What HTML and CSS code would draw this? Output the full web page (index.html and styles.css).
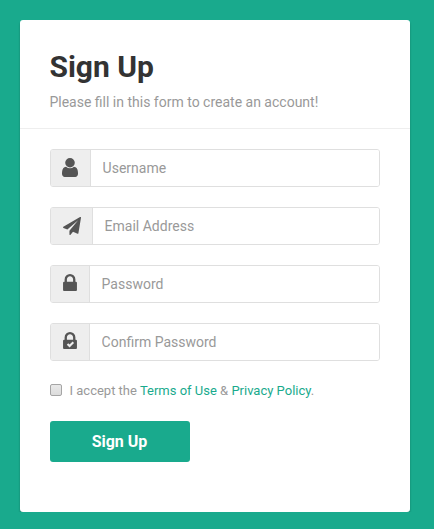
FILE: index.html
```html
<!DOCTYPE html>
<html lang="en">
<head>
<meta charset="utf-8">
<title>Sign Up</title>
<link rel="stylesheet" href="styles.css">
</head>
<body>
<form class="signup">
  <h2 class="title">Sign Up</h2>
  <p class="intro">Please fill in this form to create an account!</p>
  <hr class="rule">
  <div class="group">
    <span class="addon addon-user"><svg width="16" height="19" viewBox="256 128 1280 1536" preserveAspectRatio="none"><path d="M1536 1399q0 109-62.5 187t-150.5 78h-854q-88 0-150.5-78t-62.5-187q0-85 8.5-160.5t31.5-152 58.5-131 94-89 134.5-34.5q131 128 313 128t313-128q76 0 134.5 34.5t94 89 58.5 131 31.5 152 8.5 160.5zm-256-887q0 159-112.5 271.5t-271.5 112.5-271.5-112.5-112.5-271.5 112.5-271.5 271.5-112.5 271.5 112.5 112.5 271.5z"/></svg></span>
    <input class="field" type="text" placeholder="Username">
  </div>
  <div class="group">
    <span class="addon addon-plane"><svg width="18" height="18" viewBox="0 0 1792 1792"><path d="M1764 11q33 24 27 64l-256 1536q-5 29-32 45-14 8-31 8-11 0-24-5l-453-185-242 295q-18 23-49 23-13 0-22-4-19-7-30.5-23.5t-11.5-36.5v-349l864-1059-1069 925-395-162q-37-14-40-55-2-40 32-59l1664-960q15-9 32-9 20 0 36 11z"/></svg></span>
    <input class="field" type="text" placeholder="Email Address">
  </div>
  <div class="group">
    <span class="addon addon-lock"><svg width="14" height="17" viewBox="320 128 1152 1408"><path d="M640 768h512v-192q0-106-75-181t-181-75-181 75-75 181v192zm832 96v576q0 40-28 68t-68 28h-960q-40 0-68-28t-28-68v-576q0-40 28-68t68-28h32v-192q0-184 132-316t316-132 316 132 132 316v192h32q40 0 68 28t28 68z"/></svg></span>
    <input class="field" type="text" placeholder="Password">
  </div>
  <div class="group">
    <span class="addon addon-lock"><svg width="14" height="17" viewBox="320 128 1152 1408"><path d="M640 768h512v-192q0-106-75-181t-181-75-181 75-75 181v192zm832 96v576q0 40-28 68t-68 28h-960q-40 0-68-28t-28-68v-576q0-40 28-68t68-28h32v-192q0-184 132-316t316-132 316 132 132 316v192h32q40 0 68 28t28 68z"/><path class="tick" d="M690 1120l170 170 310-320"/></svg></span>
    <input class="field" type="text" placeholder="Confirm Password">
  </div>
  <label class="accept"><input class="check" type="checkbox"><span>I accept the <a href="#">Terms of Use</a> &amp; <a href="#">Privacy Policy</a>.</span></label>
  <button class="submit" type="button">Sign Up</button>
</form>
</body>
</html>
```
FILE: styles.css
```css
* { box-sizing: border-box; }
body {
  margin: 0;
  padding: 20px 24px 0 20px;
  background: #19aa8d;
  font-family: Roboto, sans-serif;
  font-size: 14px;
  line-height: 20px;
  color: #999;
}
.signup {
  height: 492px;
  padding: 30px;
  background: #fff;
  border-radius: 3px;
  box-shadow: 0 2px 2px rgba(0, 0, 0, .3);
}
.title {
  margin: 0 0 9px -.6px;
  font-size: 30px;
  line-height: 33px;
  font-weight: 700;
  color: #333;
}
.intro { margin: 0 0 16px -.6px; }
.rule {
  margin: 0 -30px 20px;
  border: 0;
  border-top: 1px solid #eee;
}
.group {
  display: flex;
  height: 38px;
  margin-bottom: 20px;
  border: 1px solid #dfdfdf;
  border-radius: 3px;
  overflow: hidden;
}
.addon {
  display: flex;
  flex: none;
  align-items: flex-start;
  padding: 8px 0 0 11px;
  background: #eee;
  border-right: 1px solid #dfdfdf;
}
.addon svg { display: block; fill: #555; }
.addon-user { width: 40px; }
.addon-plane { width: 42px; padding: 9px 0 0 12px; }
.addon-lock { width: 39px; padding-left: 12px; }
.tick { fill: none; stroke: #eee; stroke-width: 170; }
.field {
  flex: 1;
  min-width: 0;
  padding: 0 11px 0 11.6px;
  border: 0;
  outline: 0;
  background: #fff;
  font: inherit;
}
.field::placeholder { color: #999; opacity: 1; }
.accept {
  display: flex;
  align-items: flex-start;
  height: 20px;
  margin-bottom: 20px;
  font-size: 13px;
}
.accept a { color: #19aa8d; text-decoration: none; }
.check {
  appearance: none;
  width: 12px;
  height: 12px;
  margin: 3px 7.5px 0 0;
  border: 1px solid #a5a5a5;
  border-radius: 2px;
  background: linear-gradient(#e9e9e9, #dcdcdc);
}
.submit {
  display: block;
  width: 140px;
  height: 41px;
  padding: 0 1px 0 0;
  border: 0;
  border-radius: 3px;
  background: #19aa8d;
  color: #fff;
  font: 700 16px/22px Roboto, sans-serif;
}
```
